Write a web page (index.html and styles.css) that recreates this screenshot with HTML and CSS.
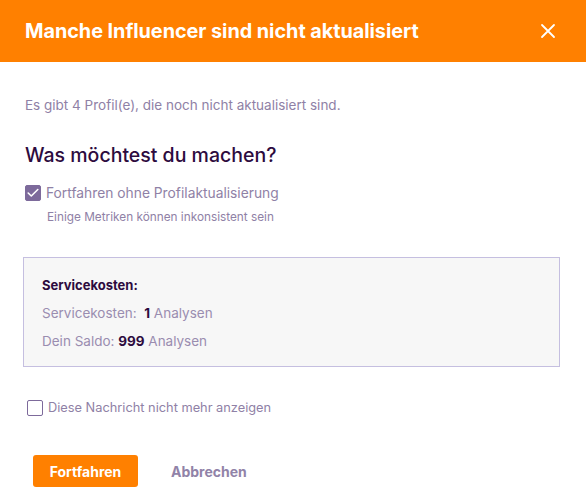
FILE: index.html
```html
<!DOCTYPE html>
<html lang="de">
<head>
<meta charset="utf-8">
<link rel="stylesheet" href="styles.css">
</head>
<body>
<div class="modal">
  <header class="modal-header">
    <h1 class="modal-title">Manche Influencer sind nicht aktualisiert</h1>
    <button class="close" aria-label="Schließen">
      <svg width="16" height="16" viewBox="0 0 16 16"><path d="M2 2 L14 14 M14 2 L2 14" stroke="#fff" stroke-width="1.8" stroke-linecap="round"/></svg>
    </button>
  </header>
  <div class="modal-body">
    <p class="info">Es gibt 4 Profil(e), die noch nicht aktualisiert sind.</p>
    <h2 class="question">Was möchtest du machen?</h2>
    <label class="check-row">
      <span class="box checked">
        <svg width="12" height="10" viewBox="0 0 12 10"><path d="M1.2 5 L4.3 8 L10.8 1.5" fill="none" stroke="#fff" stroke-width="1.6" stroke-linecap="round" stroke-linejoin="round"/></svg>
      </span>
      <span class="check-label">Fortfahren ohne Profilaktualisierung</span>
    </label>
    <p class="hint">Einige Metriken können inkonsistent sein</p>
    <div class="costs">
      <div class="costs-title">Servicekosten:</div>
      <div class="costs-line">Servicekosten:&nbsp; <b>1</b> Analysen</div>
      <div class="costs-line">Dein Saldo: <b>999</b> Analysen</div>
    </div>
    <label class="check-row small">
      <span class="box"></span>
      <span class="check-label">Diese Nachricht nicht mehr anzeigen</span>
    </label>
    <div class="actions">
      <button class="btn-primary">Fortfahren</button>
      <button class="btn-link">Abbrechen</button>
    </div>
  </div>
</div>
</body>
</html>
```
FILE: styles.css
```css
* { box-sizing: border-box; }
html, body { margin: 0; padding: 0; background: #fff; }
body { font-family: Inter, "Noto Sans", sans-serif; width: 586px; height: 498px; overflow: hidden; }
.modal { width: 586px; }
.modal-header {
  height: 62px;
  background: #ff8000;
  display: flex;
  align-items: center;
  justify-content: space-between;
  padding: 0 30px 0 25px;
}
.modal-title { margin: 0; color: #fff; font-size: 19.85px; font-weight: 700; letter-spacing: -0.05px; }
.close { background: none; border: 0; padding: 0; width: 16px; height: 16px; display: flex; }
.modal-body { padding: 0 25px; }
.info { margin: 0; padding-top: 34px; font-size: 13.5px; color: #8f81a6; line-height: 18px; }
.question { margin: 0; padding-top: 29px; font-size: 19.5px; font-weight: 500; color: #2d0b3e; line-height: 24px; }
.check-row { display: flex; align-items: center; gap: 5px; margin-top: 17px; font-size: 13.8px; color: #8f81a6; line-height: 18px; }
.box { width: 16px; height: 16px; border: 1.5px solid #7d6a9b; border-radius: 2px; display: flex; align-items: center; justify-content: center; flex: none; background: #fff; }
.box.checked { background: #7d6a9b; border-color: #7d6a9b; }
.hint { margin: 0; padding: 7px 0 0 22px; font-size: 11.8px; color: #8f81a6; line-height: 16px; }
.costs {
  margin: 32px 1px 0 -2px;
  height: 110px;
  background: #f7f7f7;
  border: 1px solid #c5bfe0;
  padding: 18px 18px 0;
}
.costs-title { font-size: 13px; font-weight: 700; color: #2d0b3e; line-height: 18px; }
.costs-line { font-size: 13.5px; color: #9a8db0; line-height: 18px; margin-top: 10px; }
.costs-line b { color: #2d0b3e; font-weight: 700; }
.check-row.small { margin-top: 32px; padding-left: 2px; font-size: 12.8px; }
.actions { display: flex; align-items: center; gap: 33px; margin-top: 38px; padding-left: 8px; }
.btn-primary { background: #ff8000; color: #fff; border: 0; border-radius: 3px; height: 32px; width: 105px; font-family: inherit; font-size: 14px; font-weight: 700; }
.btn-link { background: none; border: 0; padding: 0; color: #9183a8; font-family: inherit; font-size: 14px; font-weight: 700; }
```
